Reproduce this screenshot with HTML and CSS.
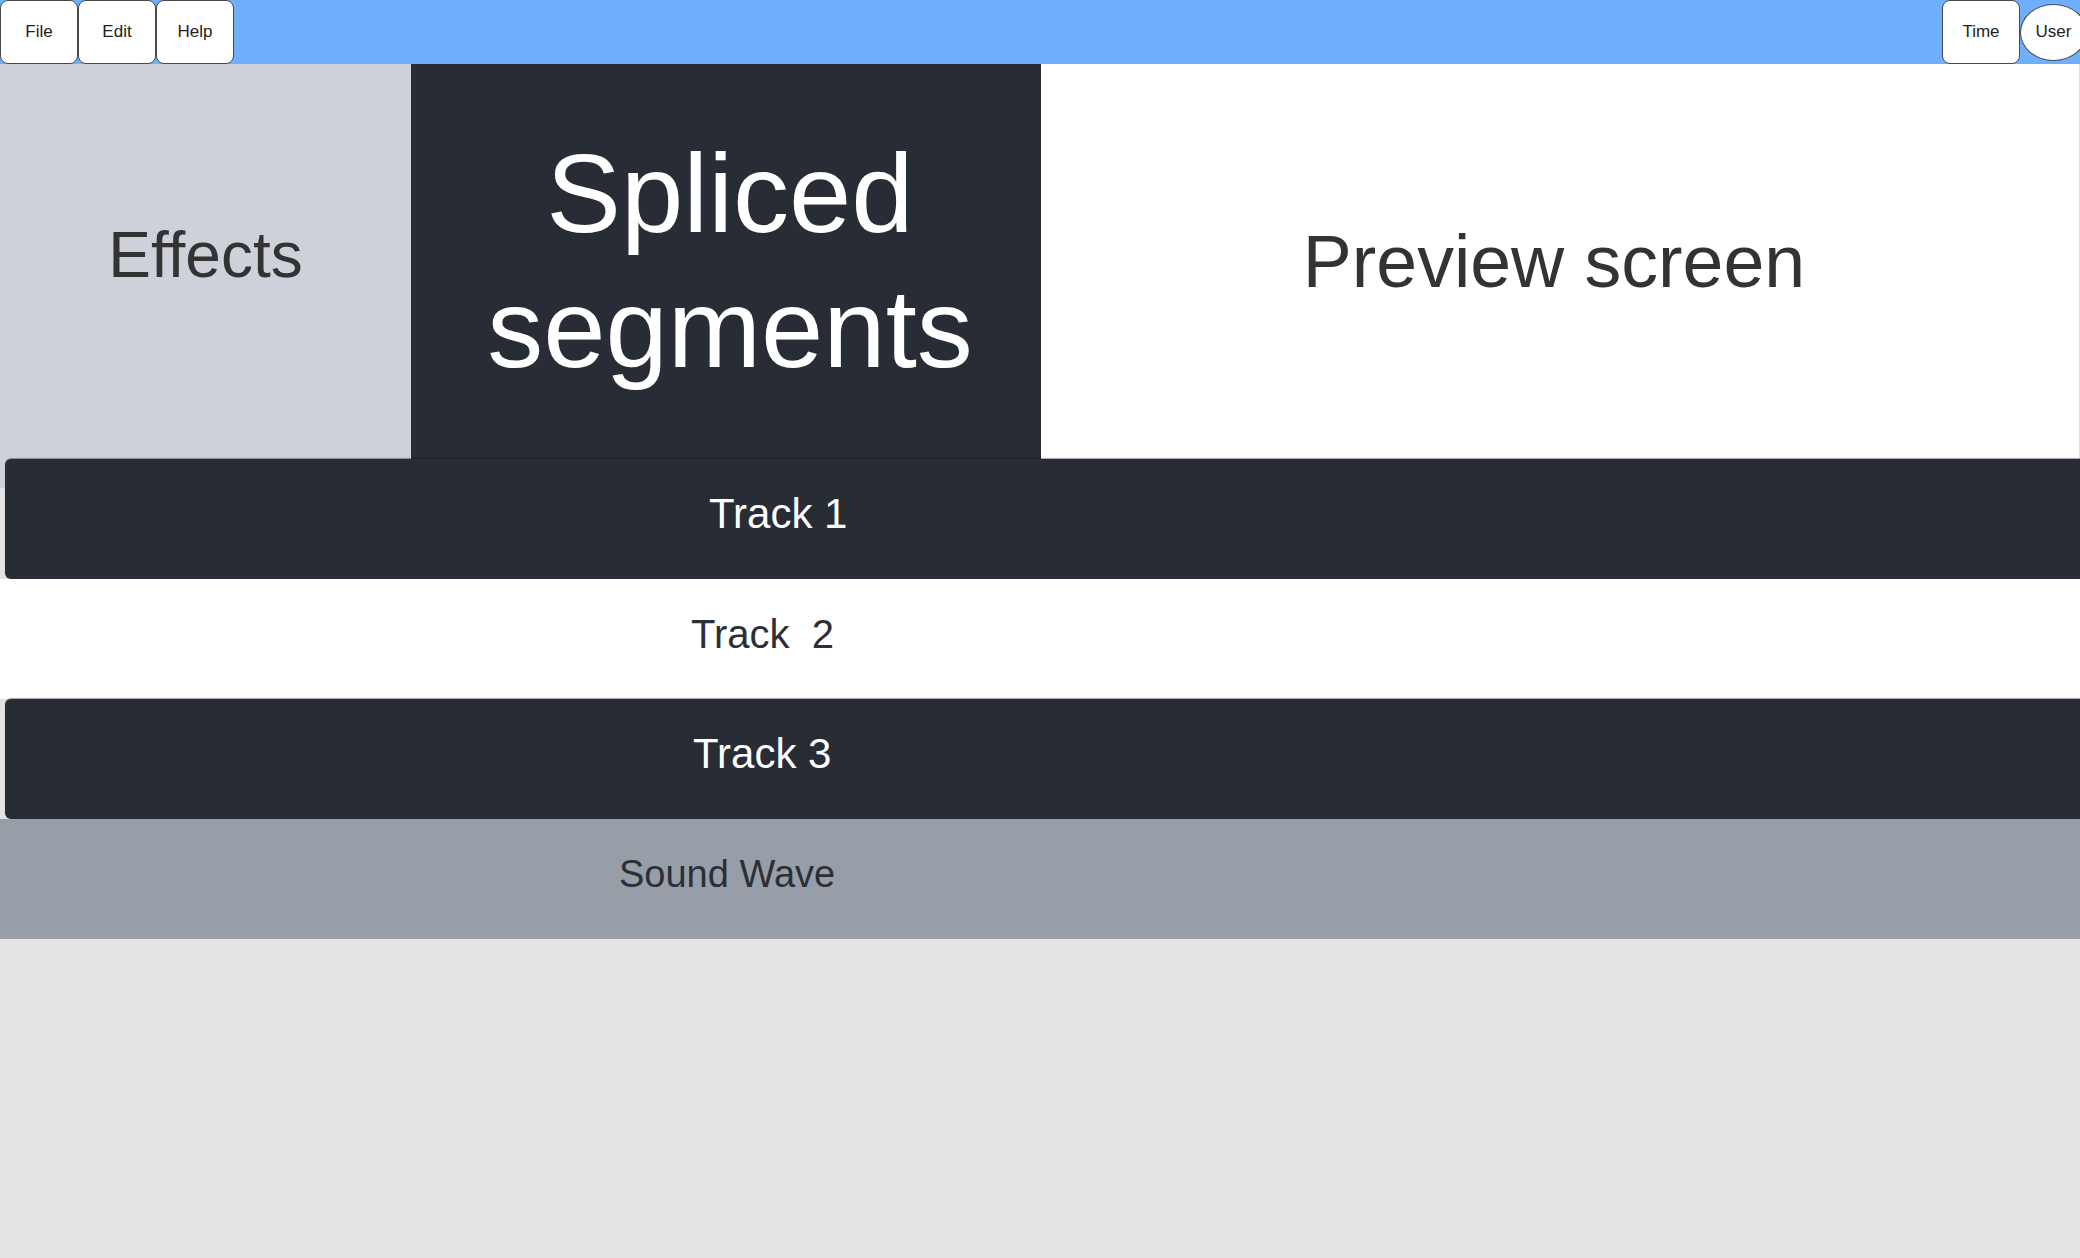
FILE: index.html
```html
<!DOCTYPE html>
<html lang="en">
<head>
<meta charset="utf-8">
<title>Editor</title>
<link rel="stylesheet" href="styles.css">
</head>
<body>
<div class="app">
  <header class="topbar">
    <nav class="menu">
      <button class="btn">File</button>
      <button class="btn">Edit</button>
      <button class="btn">Help</button>
    </nav>
    <div class="status">
      <button class="btn">Time</button>
      <button class="btn user">User</button>
    </div>
  </header>
  <section class="panels">
    <div class="panel effects"><span>Effects</span></div>
    <div class="panel spliced"><span>Spliced<br>segments</span></div>
    <div class="panel preview"><span>Preview screen</span></div>
  </section>
  <section class="tracks">
    <div class="row row-1"><div class="track dark t1">Track 1</div></div>
    <div class="row row-2"><div class="track light t2">Track&nbsp; 2</div></div>
    <div class="row row-3"><div class="track dark t3">Track 3</div></div>
    <div class="row row-4"><div class="track wave t4">Sound Wave</div></div>
  </section>
</div>
</body>
</html>
```
FILE: styles.css
```css
html, body {
  margin: 0;
  padding: 0;
}
body {
  background: #e4e4e4;
  font-family: "Liberation Sans", Arial, sans-serif;
  overflow: hidden;
  width: 2080px;
  height: 1258px;
}
.app {
  display: flex;
  flex-direction: column;
}
.topbar {
  height: 64px;
  background: #6eb0fe;
  display: flex;
  justify-content: space-between;
  align-items: stretch;
}
.menu, .status {
  display: flex;
  align-items: center;
}
.status {
  margin-right: -7px;
}
.btn {
  box-sizing: border-box;
  width: 78px;
  height: 64px;
  background: #fff;
  border: 1px solid #4a4a4a;
  border-radius: 8px;
  font-family: "Liberation Sans", Arial, sans-serif;
  font-size: 17px;
  color: #222;
  padding: 0;
  margin: 0;
}
.btn.user {
  width: 67px;
  height: 57px;
  border-radius: 50%;
}
.panels {
  display: grid;
  grid-template-columns: 411px 630px 1fr;
  grid-template-rows: 395px;
  height: 395px;
}
.panel {
  display: flex;
  align-items: center;
  justify-content: center;
  text-align: center;
  box-sizing: border-box;
}
.effects {
  background: #ced1d9;
  height: 424px;
  align-self: start;
  align-items: flex-start;
  padding-top: 154px;
  color: #333;
  font-size: 64px;
}
.spliced {
  background: #282c34;
  color: #fff;
  font-size: 112px;
  line-height: 1.2;
  padding-left: 8px;
}
.preview {
  background: #fff;
  color: #333;
  font-size: 73.5px;
  padding-right: 12px;
  border-right: 1px solid #dcdcdc;
}
.tracks {
  display: flex;
  flex-direction: column;
}
.row {
  height: 120px;
  display: flex;
}
.track {
  flex: 1;
  display: flex;
  align-items: center;
  padding-bottom: 10px;
  box-sizing: border-box;
  white-space: nowrap;
}
.dark {
  background: #282c34;
  color: #fff;
  margin-left: 5px;
  margin-right: -10px;
  border-radius: 6px;
  box-shadow: 0 -1px 1px rgba(0, 0, 0, 0.35);
  font-size: 42px;
}
.light {
  background: #fff;
  color: #2b2f36;
  font-size: 40px;
}
.wave {
  background: #989ea8;
  color: #2b2f36;
  font-size: 38px;
}
.t1 { padding-left: 704px; }
.t2 { padding-left: 691px; }
.t3 { padding-left: 688px; }
.t4 { padding-left: 619px; }
```
